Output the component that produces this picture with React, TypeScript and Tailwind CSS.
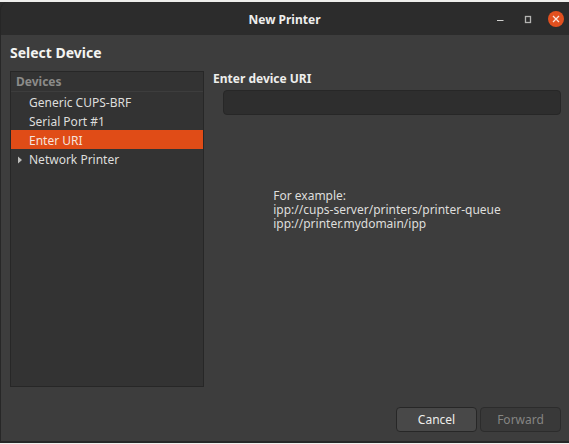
import { useState } from "react";

const devices = [
  { name: "Generic CUPS-BRF", expandable: false },
  { name: "Serial Port #1", expandable: false },
  { name: "Enter URI", expandable: false },
  { name: "Network Printer", expandable: true },
];

function TitleBar() {
  return (
    <header className="grid h-[33px] shrink-0 grid-cols-[1fr_auto_1fr] items-center rounded-t-lg border-l border-[#262626] bg-[#2c2c2c] pr-[5px]">
      <span />
      <h1 className="pt-0.5 pl-1 text-[12px] leading-4 font-bold text-[#eeeeec]">New Printer</h1>
      <div className="flex items-center justify-end gap-3 pt-px">
        <button type="button" aria-label="Minimize" className="flex size-4 items-center justify-center">
          <svg width="16" height="16" viewBox="0 0 16 16" aria-hidden="true">
            <path d="M5 9.5h6.5" stroke="#d0d0ce" strokeWidth="1" />
          </svg>
        </button>
        <button type="button" aria-label="Maximize" className="flex size-4 items-center justify-center">
          <svg width="16" height="16" viewBox="0 0 16 16" aria-hidden="true">
            <rect x="5.5" y="5.5" width="5" height="6" fill="none" stroke="#b4b4b2" strokeWidth="1.3" />
          </svg>
        </button>
        <button type="button" aria-label="Close" className="flex size-4 items-center justify-center rounded-full bg-[#e2501f]">
          <svg width="16" height="16" viewBox="0 0 16 16" aria-hidden="true">
            <path d="M5 5l6 6M11 5l-6 6" stroke="#fbe4dc" strokeWidth="1.3" />
          </svg>
        </button>
      </div>
    </header>
  );
}

function DeviceList() {
  const [selected, setSelected] = useState("Enter URI");
  return (
    <section className="w-[194px] shrink-0 border border-[#272727] bg-[#333333]" aria-label="Devices">
      <h3 className="h-5 border-b border-[#3d3d3d] pl-[5px] text-[12px] leading-5 font-bold text-[#8b8b89]">Devices</h3>
      <ul>
        {devices.map((device) => (
          <li key={device.name}>
            <button
              type="button"
              aria-pressed={selected === device.name}
              onClick={() => setSelected(device.name)}
              className={
                "flex h-[19px] w-full items-center pt-0.5 pl-[5px] text-left text-[12px] leading-4 " +
                (selected === device.name ? "bg-[#e04c17] text-[#f6e3dc]" : "text-[#dededc]")
              }
            >
              <span className="flex w-[13px] shrink-0">
                {device.expandable && (
                  <svg width="8" height="8" viewBox="0 0 8 8" aria-hidden="true">
                    <path d="M2 0.5L6 4L2 7.5z" fill="#bdbdbb" />
                  </svg>
                )}
              </span>
              {device.name}
            </button>
          </li>
        ))}
      </ul>
    </section>
  );
}

export default function App() {
  const [uri, setUri] = useState("");
  return (
    <div className="flex min-h-screen flex-col border-t-2 border-b border-[#eeeeec] bg-[#2c2c2c] font-['Noto_Sans',sans-serif]">
      <TitleBar />
      <main className="flex grow flex-col border-b-2 border-l border-[#272727] bg-[#3d3d3d] pr-2 pb-[9px] pl-[9px]">
        <h2 className="pt-1.5 pb-1.5 text-[14px] leading-6 font-bold text-[#f4f4f2]">Select Device</h2>
        <div className="flex grow gap-[9px]">
          <DeviceList />
          <section className="flex grow flex-col">
            <label htmlFor="uri" className="text-[12px] leading-4 font-bold text-[#eeeeec]">
              Enter device URI
            </label>
            <input
              id="uri"
              type="text"
              value={uri}
              onChange={(event) => setUri(event.target.value)}
              className="mt-[3px] ml-[10px] h-[25px] rounded-[4px] border border-[#272727] bg-[#2e2e2e] px-2 text-[12px] text-[#eeeeec] outline-none"
            />
            <p className="mt-[74px] self-center text-[12px] leading-[14px] text-[#dededc]">
              For example:
              <br />
              ipp://cups-server/printers/printer-queue
              <br />
              ipp://printer.mydomain/ipp
            </p>
          </section>
        </div>
        <footer className="mt-5 flex justify-end gap-[3px]">
          <button type="button" className="h-[25px] w-[81px] rounded-[4px] border border-[#272727] bg-[#484848] text-[12px] leading-4 text-[#eeeeec]">
            Cancel
          </button>
          <button type="button" disabled className="h-[25px] w-[81px] rounded-[4px] border border-[#2c2c2c] bg-[#393939] text-[12px] leading-4 text-[#858583]">
            Forward
          </button>
        </footer>
      </main>
    </div>
  );
}
